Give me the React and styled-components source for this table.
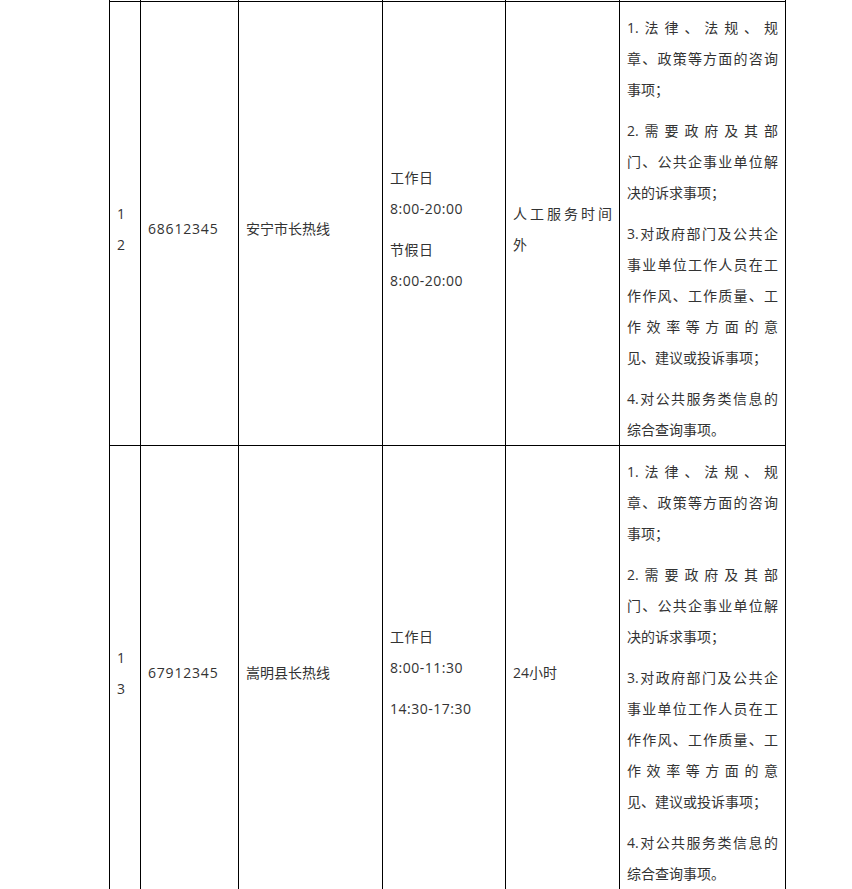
import React from 'react';
import styled, { createGlobalStyle } from 'styled-components';

const GlobalStyle = createGlobalStyle`
  html, body {
    margin: 0;
    padding: 0;
    background: #ffffff;
  }
  body {
    font-family: "Open Sans", "Noto Sans CJK SC", sans-serif;
    color: #333333;
  }
`;

const Page = styled.div`
  padding-left: 109px;
`;

const Table = styled.table`
  border-collapse: collapse;
  table-layout: fixed;
  width: 676px;
  font-size: 14px;
  line-height: 31px;
`;

const Cell = styled.td`
  border: 1px solid #000000;
  padding: 0 7px;
  vertical-align: middle;
  letter-spacing: ${(p) => p.$tracking || 'normal'};
`;

const StubCell = styled.td`
  border: 1px solid #000000;
  border-top: none;
  padding: 0;
  height: 1px;
  font-size: 0;
  line-height: 0;
`;

const Para = styled.p`
  margin: 10px 0 0;
`;

const Line = styled.span`
  display: block;
  text-align: ${(p) => (p.$spread ? 'justify' : 'left')};
  text-align-last: ${(p) => (p.$spread ? 'justify' : 'auto')};
`;

const widths = [31, 98, 144, 123, 114, 166];

const scope = [
  ['1.法律、法规、规', '章、政策等方面的咨询', '事项；'],
  ['2.需要政府及其部', '门、公共企事业单位解', '决的诉求事项；'],
  [
    '3.对政府部门及公共企',
    '事业单位工作人员在工',
    '作作风、工作质量、工',
    '作效率等方面的意',
    '见、建议或投诉事项；',
  ],
  ['4.对公共服务类信息的', '综合查询事项。'],
];

const rows = [
  {
    index: '12',
    phone: '68612345',
    name: '安宁市长热线',
    hours: [
      ['工作日', '8:00-20:00'],
      ['节假日', '8:00-20:00'],
    ],
    mode: [['人工服务时间', '外']],
    scope,
  },
  {
    index: '13',
    phone: '67912345',
    name: '嵩明县长热线',
    hours: [['工作日', '8:00-11:30'], ['14:30-17:30']],
    mode: [['24小时']],
    scope,
  },
];

function Paragraphs({ paras, justify }) {
  return paras.map((lines, i) => (
    <Para key={i}>
      {lines.map((text, j) => (
        <Line key={j} $spread={justify && j < lines.length - 1}>
          {text}
        </Line>
      ))}
    </Para>
  ));
}

export default function App() {
  return (
    <>
      <GlobalStyle />
      <Page>
        <Table>
          <colgroup>
            {widths.map((w, i) => (
              <col key={i} style={{ width: w }} />
            ))}
          </colgroup>
          <tbody>
            <tr>
              {widths.map((w, i) => (
                <StubCell key={i} />
              ))}
            </tr>
            {rows.map((row) => (
              <tr key={row.index}>
                <Cell>
                  <Paragraphs paras={[row.index.split('')]} />
                </Cell>
                <Cell $tracking="0.8px">
                  <Paragraphs paras={[[row.phone]]} />
                </Cell>
                <Cell>
                  <Paragraphs paras={[[row.name]]} />
                </Cell>
                <Cell $tracking="0.5px">
                  <Paragraphs paras={row.hours} />
                </Cell>
                <Cell>
                  <Paragraphs paras={row.mode} justify />
                </Cell>
                <Cell>
                  <Paragraphs paras={row.scope} justify />
                </Cell>
              </tr>
            ))}
          </tbody>
        </Table>
      </Page>
    </>
  );
}
